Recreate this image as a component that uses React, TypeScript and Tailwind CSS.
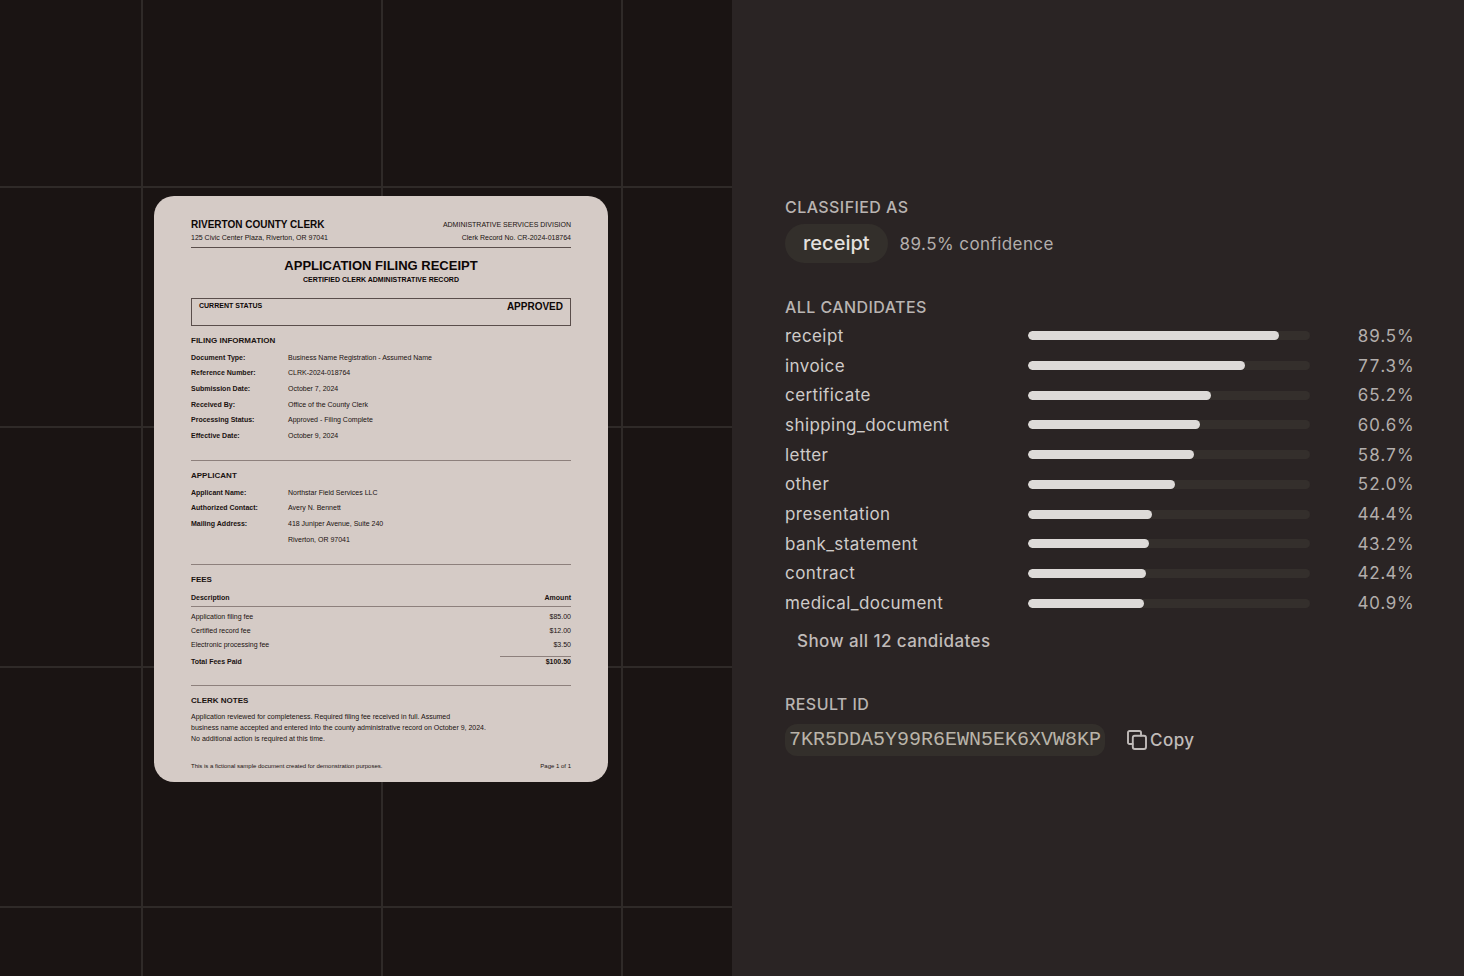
import React from 'react';

interface Field {
  label: string;
  lines: string[];
}

interface Candidate {
  name: string;
  score: number;
  // share of the track that is filled, in percent
  fill: number;
}

const filingInfo: Field[] = [
  { label: 'Document Type:', lines: ['Business Name Registration - Assumed Name'] },
  { label: 'Reference Number:', lines: ['CLRK-2024-018764'] },
  { label: 'Submission Date:', lines: ['October 7, 2024'] },
  { label: 'Received By:', lines: ['Office of the County Clerk'] },
  { label: 'Processing Status:', lines: ['Approved - Filing Complete'] },
  { label: 'Effective Date:', lines: ['October 9, 2024'] },
];

const applicantInfo: Field[] = [
  { label: 'Applicant Name:', lines: ['Northstar Field Services LLC'] },
  { label: 'Authorized Contact:', lines: ['Avery N. Bennett'] },
  { label: 'Mailing Address:', lines: ['418 Juniper Avenue, Suite 240', 'Riverton, OR 97041'] },
];

const fees = [
  { description: 'Application filing fee', amount: '$85.00' },
  { description: 'Certified record fee', amount: '$12.00' },
  { description: 'Electronic processing fee', amount: '$3.50' },
];

const candidates: Candidate[] = [
  { name: 'receipt', score: 89.5, fill: 89 },
  { name: 'invoice', score: 77.3, fill: 77 },
  { name: 'certificate', score: 65.2, fill: 65 },
  { name: 'shipping_document', score: 60.6, fill: 61 },
  { name: 'letter', score: 58.7, fill: 59 },
  { name: 'other', score: 52.0, fill: 52 },
  { name: 'presentation', score: 44.4, fill: 44 },
  { name: 'bank_statement', score: 43.2, fill: 43 },
  { name: 'contract', score: 42.4, fill: 42 },
  { name: 'medical_document', score: 40.9, fill: 41 },
];

const RESULT_ID = '7KR5DDA5Y99R6EWN5EK6XVW8KP';

const FieldList: React.FC<{ fields: Field[]; className: string }> = ({ fields, className }) => (
  <dl className={`mt-[3px] grid auto-rows-fr grid-cols-[97px_1fr] items-center ${className}`}>
    {fields.map((field) => (
      <React.Fragment key={field.label}>
        <dt className="font-bold">{field.label}</dt>
        {field.lines.map((line) => (
          <dd key={line} className="col-start-2">{line}</dd>
        ))}
      </React.Fragment>
    ))}
  </dl>
);

const ReceiptDocument: React.FC = () => (
  <article className="w-[454px] max-w-full rounded-[20px] bg-[#d5cbc6] px-[37px] pt-[22px] pb-[11px] text-[7px] leading-[10px] text-[#1a1210] font-['Liberation_Sans',Arial,sans-serif]">
    <header className="flex justify-between border-b border-[#5a4e4b] pb-1">
      <div>
        <h1 className="text-[10px] leading-[14px] font-bold text-[#0d0706]">RIVERTON COUNTY CLERK</h1>
        <p className="leading-[11px]">125 Civic Center Plaza, Riverton, OR 97041</p>
      </div>
      <div className="text-right">
        <p className="leading-[14px]">ADMINISTRATIVE SERVICES DIVISION</p>
        <p className="leading-[11px]">Clerk Record No. CR-2024-018764</p>
      </div>
    </header>

    <div className="mt-[9px] text-center font-bold text-[#0d0706]">
      <h2 className="text-[13px] leading-[18px]">APPLICATION FILING RECEIPT</h2>
      <p className="text-[7px] leading-[10px]">CERTIFIED CLERK ADMINISTRATIVE RECORD</p>
    </div>

    <div className="mt-[13px] flex h-[28px] justify-between border border-[#5a4e4b] px-[7px] pt-px font-bold text-[#0d0706]">
      <span className="text-[7px] leading-[12px]">CURRENT STATUS</span>
      <span className="text-[10px] leading-[14px]">APPROVED</span>
    </div>

    <section className="mt-[9px] border-b border-[#8d807c] pb-4">
      <h3 className="text-[8px] leading-[12px] font-bold">FILING INFORMATION</h3>
      <FieldList fields={filingInfo} className="h-[94px]" />
    </section>

    <section className="mt-[9px] border-b border-[#8d807c] pb-4">
      <h3 className="text-[8px] leading-[12px] font-bold">APPLICANT</h3>
      <FieldList fields={applicantInfo} className="h-[63px]" />
    </section>

    <section className="mt-[9px] border-b border-[#8d807c] pb-[18px]">
      <h3 className="text-[8px] leading-[12px] font-bold">FEES</h3>
      <table className="mt-[7px] w-full border-collapse">
        <thead>
          <tr className="border-b border-[#8d807c]">
            <th className="pb-[3px] text-left">Description</th>
            <th className="pb-[3px] text-right">Amount</th>
          </tr>
        </thead>
        <tbody>
          <tr aria-hidden="true">
            <td className="h-1 p-0" colSpan={2} />
          </tr>
          {fees.map((fee) => (
            <tr key={fee.description} className="leading-[14px]">
              <td>{fee.description}</td>
              <td className="text-right">{fee.amount}</td>
            </tr>
          ))}
        </tbody>
        <tfoot>
          <tr className="font-bold">
            <td className="pt-[5px]">Total Fees Paid</td>
            <td className="pt-[4px] text-right">
              <span className="ml-auto block w-[71px] border-t border-[#8d807c]">$100.50</span>
            </td>
          </tr>
        </tfoot>
      </table>
    </section>

    <section className="mt-[9px]">
      <h3 className="text-[8px] leading-[12px] font-bold">CLERK NOTES</h3>
      <p className="mt-1 leading-[11px]">
        Application reviewed for completeness. Required filing fee received in full. Assumed
        <br />
        business name accepted and entered into the county administrative record on October 9, 2024.
        <br />
        No additional action is required at this time.
      </p>
    </section>

    <footer className="mt-[17px] flex justify-between text-[6px]">
      <span>This is a fictional sample document created for demonstration purposes.</span>
      <span>Page 1 of 1</span>
    </footer>
  </article>
);

const CandidateRow: React.FC<{ candidate: Candidate }> = ({ candidate }) => (
  <li className="grid grid-cols-[243fr_282fr_104fr] items-center">
    <span className="text-[#cfcbc9]">{candidate.name}</span>
    <div className="h-[9px] overflow-hidden rounded-full bg-[#342f2c]">
      <div className="h-full rounded-full bg-[#dddad8]" style={{ width: `${candidate.fill}%` }} />
    </div>
    <span className="text-right text-[#b3aeac] tabular-nums">{candidate.score.toFixed(1)}%</span>
  </li>
);

const CopyIcon: React.FC = () => (
  <svg viewBox="0 0 20 20" className="size-5" fill="none" stroke="currentColor" strokeWidth={1.9} strokeLinejoin="round" strokeLinecap="round" aria-hidden="true">
    <rect x="5.8" y="5.8" width="13.2" height="13.2" rx="2" />
    <path d="M5.6 14H2.6A1.6 1.6 0 0 1 1 12.4V2.6A1.6 1.6 0 0 1 2.6 1h9.8A1.6 1.6 0 0 1 14 2.6v3" />
  </svg>
);

const ResultPanel: React.FC = () => {
  const handleCopy = () => {
    navigator.clipboard?.writeText(RESULT_ID);
  };

  return (
    <aside className="flex flex-col justify-center bg-[#2a2424] pr-[50px] pb-[25px] pl-[53px] text-[17px] leading-6 tracking-wide">
      <section>
        <h2 className="text-[16px] font-medium text-[#b9b4b2]">CLASSIFIED AS</h2>
        <div className="mt-[5px] flex items-center gap-3">
          <span className="rounded-full bg-[#332f2b] px-[18px] py-[7px] text-[20px] leading-[25px] font-medium tracking-normal text-[#e3e0de]">receipt</span>
          <span className="text-[#b3aeac]">89.5% confidence</span>
        </div>
      </section>

      <section className="mt-8">
        <h2 className="text-[16px] font-medium text-[#b9b4b2]">ALL CANDIDATES</h2>
        <ul className="mt-[2px] grid h-[297px] auto-rows-fr">
          {candidates.map((candidate) => (
            <CandidateRow key={candidate.name} candidate={candidate} />
          ))}
        </ul>
        <button type="button" className="px-3 py-[11px] font-medium text-[#c0bbb9]">
          Show all 12 candidates
        </button>
      </section>

      <section className="mt-7">
        <h2 className="text-[16px] font-medium text-[#b9b4b2]">RESULT ID</h2>
        <div className="mt-2 flex items-center gap-[22px]">
          <code className="rounded-xl bg-[#332f2b] px-1 py-1 text-[20px] tracking-normal text-[#b9b4a9] font-['Liberation_Mono',monospace]">{RESULT_ID}</code>
          <button type="button" onClick={handleCopy} className="flex items-center gap-[3px] font-medium text-[#c0bbb9]">
            <CopyIcon />
            Copy
          </button>
        </div>
      </section>
    </aside>
  );
};

const App: React.FC = () => (
  <main className="grid min-h-screen grid-cols-2 font-['Inter',sans-serif]">
    <div className="flex items-center justify-center bg-[#1a1413] bg-[linear-gradient(to_right,#2f2a28_2px,transparent_2px),linear-gradient(to_bottom,#2f2a28_2px,transparent_2px)] bg-size-[240px_240px] bg-position-[141px_186px] pt-[2px] pl-[30px]">
      <ReceiptDocument />
    </div>
    <ResultPanel />
  </main>
);

export default App;
